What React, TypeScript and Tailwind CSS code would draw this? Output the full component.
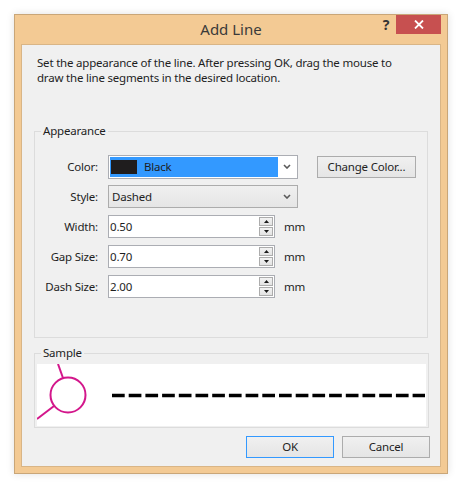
import type { ReactNode } from "react";

const font = { fontFamily: '"Noto Sans", "Open Sans", Arial, sans-serif' };

function Chevron() {
  return (
    <svg width="8" height="5" viewBox="0 0 8 5" aria-hidden>
      <path d="M1 1 L4 4 L7 1" fill="none" stroke="#5a5a5a" strokeWidth="1.6" />
    </svg>
  );
}

function SpinBox({ value }: { value: string }) {
  return (
    <div className="flex h-[23px] w-[167px] items-center border border-[#abadb3] bg-white pl-[1px] pr-[1px]">
      <span className="flex-1 leading-[15px] text-[#1e1e1e]">{value}</span>
      <div className="flex h-[19px] w-[14px] flex-col gap-[1px]">
        <div className="flex h-[9px] items-center justify-center border border-[#acacac] bg-gradient-to-b from-[#f2f2f2] to-[#e3e3e3]">
          <svg width="5" height="3" viewBox="0 0 5 3" aria-hidden>
            <path d="M0 3 L2.5 0 L5 3 Z" fill="#1a1a1a" />
          </svg>
        </div>
        <div className="flex h-[9px] items-center justify-center border border-[#acacac] bg-gradient-to-b from-[#f2f2f2] to-[#e3e3e3]">
          <svg width="5" height="3" viewBox="0 0 5 3" aria-hidden>
            <path d="M0 0 L2.5 3 L5 0 Z" fill="#1a1a1a" />
          </svg>
        </div>
      </div>
    </div>
  );
}

function Row({ label, children }: { label: string; children: ReactNode }) {
  return (
    <div className="flex h-[23px] items-center">
      <span className="w-[63px] text-right text-[#1e1e1e]">{label}</span>
      <div className="ml-[10px] flex items-center">{children}</div>
    </div>
  );
}

function Group({ title, className, children }: { title: string; className: string; children: ReactNode }) {
  return (
    <div className={`ml-[12px] w-[394px] border border-[#dcdcdc] ${className}`}>
      <div className="-mt-[9px] ml-[6px] w-fit bg-[#f0f0f0] px-[2px] leading-[15px] text-[#1e1e1e]">{title}</div>
      {children}
    </div>
  );
}

function Button({ label, primary, className = "" }: { label: string; primary?: boolean; className?: string }) {
  return (
    <button
      className={`flex h-[22px] items-center justify-center border bg-gradient-to-b from-[#f0f0f0] to-[#e5e5e5] text-[#1e1e1e] ${
        primary ? "border-[#3399ff]" : "border-[#acacac]"
      } ${className}`}
    >
      {label}
    </button>
  );
}

export default function App() {
  return (
    <div className="h-[493px] w-[466px] bg-white pt-[14px] pl-[14px] text-[11.5px] tracking-[-0.2px]" style={font}>
      <div className="flex h-[460px] w-[434px] flex-col border border-[#c9a678] bg-[#f3ca94] px-[6px] pb-[6px] shadow-[0_0_8px_rgba(0,0,0,0.12)]">
        {/* title bar */}
        <div className="-mx-[6px] flex h-[29px]">
          <div className="w-[71px]" />
          <div className="flex-1 pt-[4px] text-center text-[15px] leading-[20px] tracking-normal text-[#3a3a3a]">Add Line</div>
          <div className="flex w-[71px] items-start">
            <span className="mt-[1px] w-[20px] text-center text-[14px] font-bold leading-[18px] text-[#333]">?</span>
            <div className="flex h-[19px] w-[45px] items-center justify-center bg-[#c75050]">
              <svg width="10" height="9" viewBox="0 0 10 9" aria-hidden>
                <path d="M1 0.5 L9 8.5 M9 0.5 L1 8.5" stroke="white" strokeWidth="1.8" />
              </svg>
            </div>
          </div>
        </div>

        {/* client area */}
        <div className="flex flex-1 flex-col border border-[#d9b586] bg-[#f0f0f0]">
          <p className="pt-[10px] pl-[15px] leading-[15px] text-[#1e1e1e]">
            Set the appearance of the line. After pressing OK, drag the mouse to
            <br />
            draw the line segments in the desired location.
          </p>

          <Group title="Appearance" className="mt-[46px] h-[207px]">
            <div className="mt-[17px] flex flex-col gap-[7px]">
              <Row label="Color:">
                <div className="flex h-[24px] w-[190px] items-center border border-[#abadb3] bg-white pl-[1px] pr-[6px]">
                  <div className="flex h-[20px] w-[168px] items-center bg-[#3399ff]">
                    <div className="ml-[1px] h-[14px] w-[26px] bg-[#1f1d1e]" />
                    <span className="ml-[7px] text-[#1e1e1e]">Black</span>
                  </div>
                  <div className="flex flex-1 justify-end">
                    <Chevron />
                  </div>
                </div>
                <Button label="Change Color..." className="ml-[19px] w-[99px]" />
              </Row>
              <Row label="Style:">
                <div className="flex h-[23px] w-[190px] items-center border border-[#acacac] bg-gradient-to-b from-[#f0f0f0] to-[#e5e5e5] pl-[3px] pr-[6px]">
                  <span className="flex-1 text-[#1e1e1e]">Dashed</span>
                  <Chevron />
                </div>
              </Row>
              <Row label="Width:">
                <SpinBox value="0.50" />
                <span className="ml-[9px] text-[#1e1e1e]">mm</span>
              </Row>
              <Row label="Gap Size:">
                <SpinBox value="0.70" />
                <span className="ml-[9px] text-[#1e1e1e]">mm</span>
              </Row>
              <Row label="Dash Size:">
                <SpinBox value="2.00" />
                <span className="ml-[9px] text-[#1e1e1e]">mm</span>
              </Row>
            </div>
          </Group>

          <Group title="Sample" className="mt-[15px] h-[75px] w-[395px]">
            <div className="mx-[2px] mt-[4px] h-[62px] bg-white">
              <svg width="388" height="62" viewBox="0 0 388 62" aria-hidden>
                <circle cx="31" cy="31" r="17.5" fill="none" stroke="#d3178b" strokeWidth="2" />
                <path d="M21 0 L26 14" stroke="#d3178b" strokeWidth="2" />
                <path d="M0 55 L17 42" stroke="#d3178b" strokeWidth="2" />
                <path d="M75 31.5 L388 31.5" stroke="#000" strokeWidth="3.3" strokeDasharray="12.7 4" />
              </svg>
            </div>
          </Group>

          <div className="mt-[8px] mr-[10px] flex justify-end gap-[8px]">
            <Button label="OK" primary className="w-[88px]" />
            <Button label="Cancel" className="w-[88px]" />
          </div>
        </div>
      </div>
    </div>
  );
}
